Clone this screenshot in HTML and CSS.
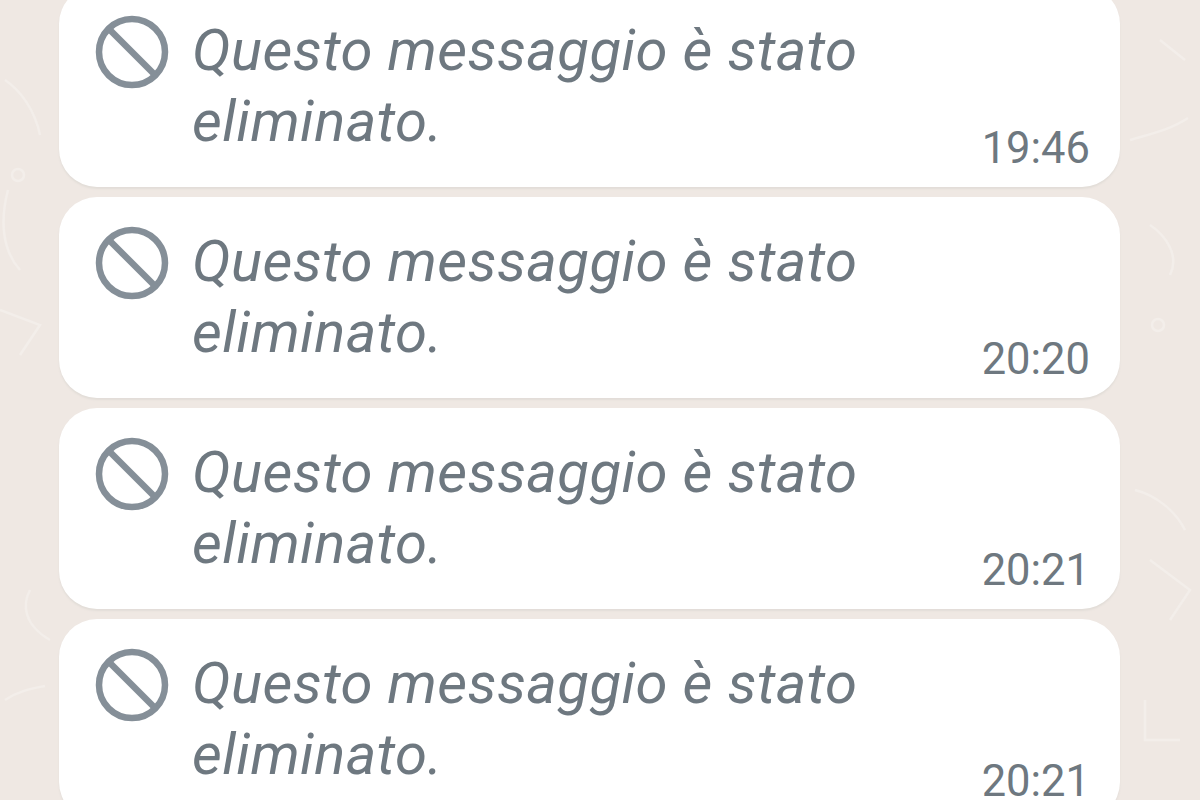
FILE: index.html
```html
<!DOCTYPE html>
<html lang="it">
<head>
<meta charset="utf-8">
<title>Messaggi eliminati</title>
<link rel="stylesheet" href="styles.css">
</head>
<body>
<svg class="doodles" width="1200" height="800" viewBox="0 0 1200 800" fill="none" stroke="#f3eeea" stroke-width="2.5" aria-hidden="true">
  <path d="M8 190c-8 30-6 60 12 80"/><path d="M5 80c15 10 30 30 35 55"/><path d="M0 310l40 15-20 30"/>
  <circle cx="18" cy="175" r="6"/><path d="M30 590c-8 15-6 35 20 50"/><path d="M5 700c15-10 30-12 40-14"/>
  <path d="M1130 140c20-6 40-10 58-22"/><path d="M1150 225c15 10 30 30 20 50"/><path d="M1135 490c20 5 40 20 50 40"/>
  <circle cx="1158" cy="325" r="6"/><path d="M1150 560l40 30-20 30"/><path d="M1145 700v40h35"/><path d="M1160 40l25 20"/>
</svg>
<main class="chat">
  <article class="bubble">
    <svg class="ban" viewBox="0 0 74 74" fill="none" stroke="#858f98" stroke-width="6.5" aria-hidden="true"><circle cx="37" cy="37" r="33"/><path d="M14 14l46 46"/></svg>
    <p class="text">Questo messaggio è stato eliminato.</p>
    <time class="time">19:46</time>
  </article>
  <article class="bubble">
    <svg class="ban" viewBox="0 0 74 74" fill="none" stroke="#858f98" stroke-width="6.5" aria-hidden="true"><circle cx="37" cy="37" r="33"/><path d="M14 14l46 46"/></svg>
    <p class="text">Questo messaggio è stato eliminato.</p>
    <time class="time">20:20</time>
  </article>
  <article class="bubble">
    <svg class="ban" viewBox="0 0 74 74" fill="none" stroke="#858f98" stroke-width="6.5" aria-hidden="true"><circle cx="37" cy="37" r="33"/><path d="M14 14l46 46"/></svg>
    <p class="text">Questo messaggio è stato eliminato.</p>
    <time class="time">20:21</time>
  </article>
  <article class="bubble">
    <svg class="ban" viewBox="0 0 74 74" fill="none" stroke="#858f98" stroke-width="6.5" aria-hidden="true"><circle cx="37" cy="37" r="33"/><path d="M14 14l46 46"/></svg>
    <p class="text">Questo messaggio è stato eliminato.</p>
    <time class="time">20:21</time>
  </article>
</main>
</body>
</html>
```

FILE: styles.css
```css
html, body {
  margin: 0;
  height: 800px;
  overflow: hidden;
  background: #efe8e3;
}
body {
  position: relative;
  font-family: Roboto, "Liberation Sans", sans-serif;
}
.doodles {
  position: absolute;
  left: 0;
  top: 0;
}
.chat {
  position: relative;
  display: flex;
  flex-direction: column;
  gap: 10px;
  margin: -14px 80px 0 59px;
}
.bubble {
  display: flex;
  align-items: flex-start;
  height: 201px;
  flex: none;
  box-sizing: border-box;
  padding: 29px 30px 0 36px;
  background: #fff;
  border-radius: 38px;
  box-shadow: 0 2px 2px #e2ddd8;
}
.ban {
  width: 74px;
  height: 74px;
  flex: none;
  margin-right: 23px;
}
.text {
  flex: 0 0 680px;
  margin: 0;
  font-size: 58px;
  line-height: 71px;
  letter-spacing: 0.4px;
  font-style: italic;
  color: #6e7880;
}
.time {
  margin-left: auto;
  align-self: flex-end;
  margin-bottom: 13px;
  font-size: 43.5px;
  line-height: 50px;
  color: #6e7880;
}
```
